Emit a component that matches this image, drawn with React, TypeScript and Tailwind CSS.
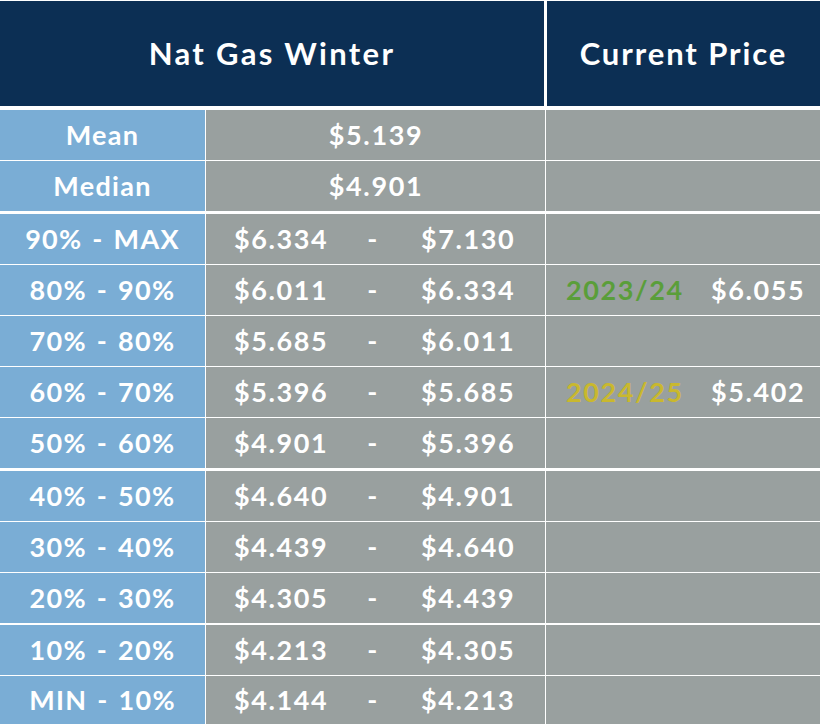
import React from "react";

const rows: { label: string; lo: string; hi?: string; year?: string; yearColor?: string; price?: string; mt?: string }[] = [
  { label: "Mean", lo: "$5.139" },
  { label: "Median", lo: "$4.901" },
  { label: "90% - MAX", lo: "$6.334", hi: "$7.130", mt: "mt-[2px]" },
  { label: "80% - 90%", lo: "$6.011", hi: "$6.334", year: "2023/24", yearColor: "text-[#5a9e3a]", price: "$6.055" },
  { label: "70% - 80%", lo: "$5.685", hi: "$6.011" },
  { label: "60% - 70%", lo: "$5.396", hi: "$5.685", year: "2024/25", yearColor: "text-[#c9b82e]", price: "$5.402" },
  { label: "50% - 60%", lo: "$4.901", hi: "$5.396" },
  { label: "40% - 50%", lo: "$4.640", hi: "$4.901", mt: "mt-[2px]" },
  { label: "30% - 40%", lo: "$4.439", hi: "$4.640" },
  { label: "20% - 30%", lo: "$4.305", hi: "$4.439" },
  { label: "10% - 20%", lo: "$4.213", hi: "$4.305", mt: "mt-[1px]" },
  { label: "MIN - 10%", lo: "$4.144", hi: "$4.213" },
];

export default function App() {
  return (
    <div
      className="w-[820px] h-[724px] bg-white flex flex-col overflow-hidden text-white"
      style={{ fontFamily: "Lato, 'Open Sans', sans-serif" }}
    >
      <div className="flex mt-[1px] h-[105px] gap-[3px]">
        <div className="w-[544px] bg-[#0c2f54] flex items-center justify-center text-[31px] font-bold tracking-[2.3px] pb-[1px]">
          Nat Gas Winter
        </div>
        <div className="flex-1 bg-[#0c2f54] flex items-center justify-center text-[31px] font-bold tracking-[1.9px] pb-[1px]">
          Current Price
        </div>
      </div>
      <div className="flex flex-col gap-[1px] mt-[4px] flex-1">
        {rows.map((r, i) => (
          <div
            key={r.label}
            className={`flex gap-[1px] ${i === rows.length - 1 ? "flex-1" : "h-[50px]"} ${r.mt ?? ""}`}
          >
            <div className="w-[205px] bg-[#7aadd5] flex items-center justify-center text-[27px] font-bold tracking-[1.3px] [word-spacing:2px]">
              {r.label}
            </div>
            <div className="w-[339px] bg-[#99a09f] flex items-center text-[27px] font-bold tracking-[1.6px]">
              {r.hi ? (
                <div className="flex items-center pl-[28px]">
                  <span className="w-[124px]">{r.lo}</span>
                  <span className="w-[30px] text-center">-</span>
                  <span className="ml-[33px]">{r.hi}</span>
                </div>
              ) : (
                <div className="w-full text-center pl-[1px]">{r.lo}</div>
              )}
            </div>
            <div className="flex-1 bg-[#99a09f] flex items-center text-[27px] font-bold tracking-[1.6px]">
              {r.year && (
                <div className="flex items-center pl-[20px]">
                  <span className={`w-[145px] ${r.yearColor}`}>{r.year}</span>
                  <span>{r.price}</span>
                </div>
              )}
            </div>
          </div>
        ))}
      </div>
    </div>
  );
}
